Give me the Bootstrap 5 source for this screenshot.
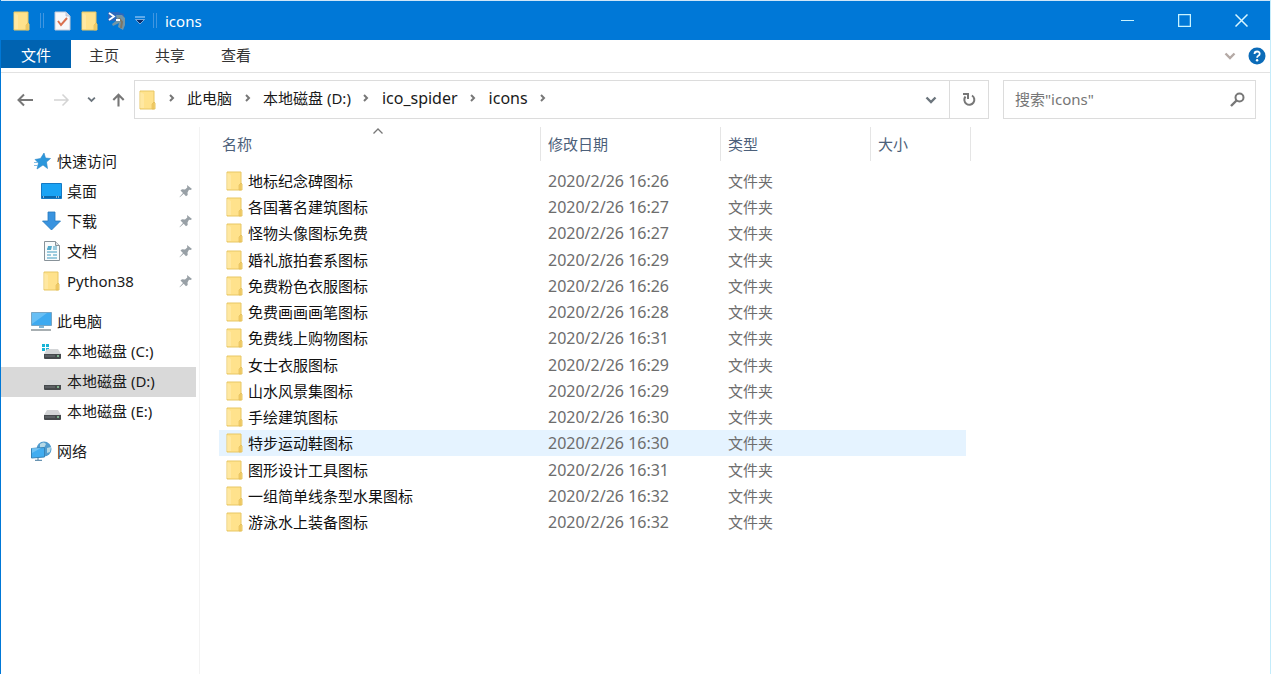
<!DOCTYPE html>
<html lang="zh-CN">
<head>
<meta charset="utf-8">
<meta name="viewport" content="width=device-width, initial-scale=1">
<title>icons</title>
<link href="https://cdn.jsdelivr.net/npm/bootstrap@5.3.0/dist/css/bootstrap.min.css" rel="stylesheet">
<style>
  body { font-family: "Noto Sans", "Noto Sans CJK SC", sans-serif; font-size: 15px; line-height: 20px; color: #1a1a1a; background: #fff; }
  svg { display: block; flex: none; }
  button, a { color: inherit; text-decoration: none; }
  .plain-btn { border: 0; background: none; padding: 0; display: flex; align-items: center; justify-content: center; }
  .explorer { border-left: 1px solid #0078d7; border-right: 1px solid #c4ecfb; }
  .title-bar { background: #0078d7; color: #fff; height: 40px; border-top: 1px solid #cfe6f8; padding: 0 0 0 12px; }
  .title-bar .quick { gap: 10px; }
  .divider { width: 4px; height: 15px; border: solid #4196e0; border-width: 0 1px; }
  .caption-btns .plain-btn { width: 57px; height: 37px; }
  .ribbon { height: 33px; border-bottom: 1px solid #e2e2e2; }
  .ribbon .tab-link { height: 28px; line-height: 30px; width: 66px; text-align: center; color: #333; }
  .ribbon .file-tab { width: 70px; background: #0063b1; color: #fff; }
  .ribbon .expand { color: #b5aaa6; }
  .nav-row { padding: 7px 14px 8px 0; }
  .nav-row .outlined { height: 39px; border: 1px solid #dcdcdc; }
  .arrows { width: 133px; padding-left: 14px; }
  .address { padding-left: 4px; }
  .address nav { padding-bottom: 3px; }
  .address .latin { font-size: 16px; }
  .crumb-sep { width: 31px; display: flex; justify-content: center; }
  .refresh { width: 39px; height: 37px; border-left: 1px solid #dcdcdc; }
  .search-box { width: 253px; margin-left: 14px; padding: 0 10px 0 11px; }
  .search-box input { border: 0; outline: 0; background: none; padding: 0 0 2px; min-width: 0; color: #555; }
  .search-box input::placeholder { color: #767676; opacity: 1; }
  .side { width: 199px; border-right: 1px solid #f3f3f3; padding-top: 20px; min-height: 547px; }
  .side a { height: 30px; margin-right: 3px; padding: 0 3px 2px 30px; gap: 5px; }
  .side .child { padding-left: 40px; }
  .side .group { margin-bottom: 10px; }
  .side .chosen { background: #d9d9d9; }
  .pin { margin-left: auto; }
  .files { width: 752px; margin-left: 19px; table-layout: fixed; border-collapse: separate; border-spacing: 0; }
  .files th { height: 34px; border-right: 1px solid #e5e5e5; font-weight: 400; color: #4c607a; padding: 0 7px; vertical-align: middle; }
  .files th:first-child { padding-left: 3px; }
  .files tbody::before { content: ""; display: block; height: 7px; }
  .files td { height: 26px; padding: 0 7px; vertical-align: middle; color: #6d6d6d; }
  .files tr:nth-child(4n) td { height: 27px; }
  .files td:last-child { border-right: 5px solid #fff; }
  .files .hovered td { background: #e5f3ff; }
  .files .date { font-size: 16px; }
  .files .file-name { gap: 5px; color: #111; }
  .sort-mark { left: 50%; top: 0; margin-left: -8px; }
</style>
<script src="https://cdn.jsdelivr.net/npm/bootstrap@5.3.0/dist/js/bootstrap.bundle.min.js"></script>
</head>
<body>
<svg width="0" height="0" class="position-absolute" aria-hidden="true">
  <defs>
    <symbol id="folder" viewBox="0 0 17 20"><path d="M1 1h14v11l1 1v6H1z" fill="#ffe28c" stroke="#e8c765"/><path d="M1 18V2l4 2v14z" fill="#ffedb0" opacity=".6"/><path d="M13 19v-5l2-2v7z" fill="#f5cf68" stroke="#dfb954" stroke-width=".6"/></symbol>
    <symbol id="chev" viewBox="0 0 8 8"><path d="M2 1l3 3-3 3" fill="none" stroke="#777" stroke-width="2"/></symbol>
    <symbol id="down" viewBox="0 0 12 8"><path d="M1.500 1.500L6 6l4.500-4.500" fill="none" stroke="currentColor" stroke-width="2.400"/></symbol>
    <symbol id="pinned" viewBox="0 0 14 14"><path d="M8 1l5 4-1.500 1-1.500-.3L8.500 8.500l.2 2.500L7 12.300 4.700 9.700.8 13.200.5 13 4 9 1.500 6.500 3 5.200l3 .2L8.300 3.500z" fill="#98a0a6"/></symbol>
    <symbol id="disk" viewBox="0 0 17 10"><path d="M3 0h11l3 5H0z" fill="#d3d5d7"/><path d="M0 5h17v4q0 1-1 1H1q-1 0-1-1z" fill="#45494c"/><path d="M1 7h10" stroke="#71777a"/><path d="M13 7h2" stroke="#8fd5a3" stroke-width="1.500"/></symbol>
  </defs>
</svg>
<div class="explorer min-vh-100">
  <header class="title-bar d-flex align-items-center">
    <div class="quick d-flex align-items-center">
      <svg width="17" height="20"><use href="#folder"/></svg>
      <span class="divider"></span>
      <button class="plain-btn" aria-label="属性"><svg width="17" height="20" viewBox="0 0 17 20"><path d="M1 1h11l4 4v14H1z" fill="#f7f8fa" stroke="#c5c9d6"/><path d="M12 1v4h4" fill="#d7dae4" stroke="#aeb8cc" stroke-width=".7"/><path d="M4 10l3 4 6-7" fill="none" stroke="#d9704f" stroke-width="2"/></svg></button>
      <button class="plain-btn" aria-label="新建文件夹"><svg width="17" height="20"><use href="#folder"/></svg></button>
      <button class="plain-btn" aria-label="PowerShell"><svg width="17" height="20" viewBox="0 0 17 20"><path d="M0 1h10l6 2v7H0z" fill="#2b69bd"/><path d="M8 4h6l3 3v7l-2 5-5-3 1-4-6 3-1-2 5-4z" fill="#7395a5"/><path d="M11 7l3 4-1 6" fill="none" stroke="#7d7666" stroke-width="2"/><path d="M1 2l5 3.500L1 9M8 9h4" fill="none" stroke="#fff" stroke-width="1.800"/></svg></button>
      <button class="plain-btn" aria-label="自定义快速访问工具栏"><svg width="10" height="9" viewBox="0 0 10 9"><path d="M0 1h10" stroke="#bcdcff"/><path d="M.5 3.500h9L5 8z" fill="#0b2e6c" stroke="#a9d0f7" stroke-width=".7"/></svg></button>
    </div>
    <span class="divider mx-2"></span>
    <span>icons</span>
    <div class="caption-btns d-flex ms-auto">
      <button class="plain-btn" aria-label="最小化"><svg width="13" height="13"><path d="M0 6.500h13" stroke="#c9f3ff"/></svg></button>
      <button class="plain-btn" aria-label="最大化"><svg width="13" height="13"><path d="M.5.5h12v12H.5z" fill="none" stroke="#c9f3ff" stroke-width="1.500"/></svg></button>
      <button class="plain-btn" aria-label="关闭"><svg width="13" height="13"><path d="M.5.5l12 12M12.500.5l-12 12" stroke="#d8f6ff" stroke-width="1.500"/></svg></button>
    </div>
  </header>

  <nav class="ribbon d-flex">
    <a href="#" class="tab-link file-tab">文件</a>
    <a href="#" class="tab-link">主页</a>
    <a href="#" class="tab-link">共享</a>
    <a href="#" class="tab-link">查看</a>
    <div class="d-flex align-items-center ms-auto gap-2 me-1">
      <button class="plain-btn expand me-1" aria-label="展开功能区"><svg width="12" height="8"><use href="#down"/></svg></button>
      <button class="plain-btn" aria-label="帮助"><svg width="18" height="18" viewBox="0 0 18 18"><circle cx="9" cy="9" r="8.500" fill="#0b6bb8"/><path d="M6.500 7q0-2.500 2.600-2.500T11.700 6.800q0 1.300-1.400 2-1.200.6-1.200 2" fill="none" stroke="#fff" stroke-width="1.800"/><circle cx="9.100" cy="13.200" r="1.200" fill="#fff"/></svg></button>
    </div>
  </nav>

  <div class="nav-row d-flex align-items-center">
    <div class="arrows d-flex align-items-center">
      <button class="plain-btn" aria-label="后退"><svg width="20" height="16" viewBox="0 0 20 16"><path d="M18 8H4M9 2.500L3.500 8 9 13.500" fill="none" stroke="#777" stroke-width="2"/></svg></button>
      <button class="plain-btn ms-3" aria-label="前进"><svg width="20" height="16" viewBox="0 0 20 16"><path d="M3 8h14M11.500 2.500L17 8l-5.500 5.500" fill="none" stroke="#d4d4d4" stroke-width="1.500"/></svg></button>
      <button class="plain-btn ms-3 text-secondary" aria-label="最近位置"><svg width="9" height="7"><use href="#down"/></svg></button>
      <button class="plain-btn ms-3" aria-label="上移"><svg width="13" height="16" viewBox="0 0 15 17"><path d="M7.500 16V3M1.500 8.500l6-6 6 6" fill="none" stroke="#777" stroke-width="2.400"/></svg></button>
    </div>
    <div class="address outlined d-flex align-items-center flex-grow-1">
      <svg width="17" height="20"><use href="#folder"/></svg>
      <nav class="d-flex align-items-center" aria-label="路径">
        <span class="crumb-sep"><svg width="8" height="8"><use href="#chev"/></svg></span>
        <a href="#">此电脑</a>
        <span class="crumb-sep"><svg width="8" height="8"><use href="#chev"/></svg></span>
        <a href="#">本地磁盘 (D:)</a>
        <span class="crumb-sep"><svg width="8" height="8"><use href="#chev"/></svg></span>
        <a href="#" class="latin">ico_spider</a>
        <span class="crumb-sep"><svg width="8" height="8"><use href="#chev"/></svg></span>
        <a href="#" class="latin">icons</a>
        <span class="crumb-sep"><svg width="8" height="8"><use href="#chev"/></svg></span>
      </nav>
      <button class="plain-btn ms-auto me-2 text-secondary" aria-label="以前的位置"><svg class="me-1" width="12" height="8"><use href="#down"/></svg></button>
      <button class="plain-btn refresh" aria-label="刷新"><svg width="14" height="15" viewBox="0 0 14 15"><path d="M10 3.500A5 5 0 1 1 3.500 4.500M1 2h5v5" fill="none" stroke="#777" stroke-width="2"/></svg></button>
    </div>
    <form class="search-box outlined d-flex align-items-center">
      <input class="flex-grow-1" type="text" placeholder='搜索"icons"' aria-label="搜索">
      <button class="plain-btn" type="button" aria-label="开始搜索"><svg width="15" height="15" viewBox="0 0 15 15"><circle cx="9.500" cy="5.500" r="4" fill="none" stroke="#777" stroke-width="2"/><path d="M6.500 8.500L1 14" stroke="#777" stroke-width="2.400"/></svg></button>
    </form>
  </div>

  <main class="d-flex">
    <nav class="side d-flex flex-column flex-shrink-0">
      <div class="group d-flex flex-column">
        <a href="#" class="d-flex align-items-center"><svg width="21" height="18" viewBox="0 0 21 18"><path d="M13 1l1.500 5 5 .5-4 3.500 1 6.500-4.500-3.500L6 17l1.500-6L4 7.500l5.500-1z" fill="#2b97dc" stroke="#2b84c4" stroke-width=".6"/><path d="M3 10.500h4M3 13.500h4" stroke="#82bde5" stroke-width="1.200"/></svg>快速访问</a>
        <a href="#" class="child d-flex align-items-center"><svg width="21" height="16" viewBox="0 0 21 16"><path d="M.5.5h20v15H.5z" fill="#1aa3f4" stroke="#1479c4"/><path d="M1 14h19" stroke="#0a68ad" stroke-width="2"/><path d="M2 14h1m12 0h1m1 0h1" stroke="#fff"/></svg>桌面<svg class="pin" width="14" height="14"><use href="#pinned"/></svg></a>
        <a href="#" class="child d-flex align-items-center"><svg width="21" height="20" viewBox="0 0 21 20"><path d="M7 1h7v9h5.500l-9 9-9-9H7z" fill="#3993df" stroke="#2678bd" stroke-width=".8"/></svg>下载<svg class="pin" width="14" height="14"><use href="#pinned"/></svg></a>
        <a href="#" class="child d-flex align-items-center"><svg width="21" height="20" viewBox="0 0 21 20"><path d="M3.500.5h11l4 4v15h-15z" fill="#f8fbfc" stroke="#889299"/><path d="M14.500.5v4h4" fill="#dbe2e6" stroke="#889299"/><path d="M6 8h3m3-2h4m-4 2h4M6 11h10M6 14h4m2 0h4M6 17h10" stroke="#3e9bc0" stroke-width="1.200"/><path d="M7 5h4l-1 4H6z" fill="#52a9cb"/></svg>文档<svg class="pin" width="14" height="14"><use href="#pinned"/></svg></a>
        <a href="#" class="child d-flex align-items-center"><svg width="21" height="20"><use href="#folder"/></svg>Python38<svg class="pin" width="14" height="14"><use href="#pinned"/></svg></a>
      </div>
      <div class="group d-flex flex-column">
        <a href="#" class="d-flex align-items-center"><svg width="21" height="19" viewBox="0 0 21 19"><path d="M.5.5h20v13H.5z" fill="#3eaaf0" stroke="#77a5c4"/><path d="M1 12L16 1H1z" fill="#83cdf9" opacity=".6"/><path d="M8 14h5v2H8z" fill="#80b5d4"/><path d="M0 18h20" stroke="#8b9499" stroke-width="1.500"/></svg>此电脑</a>
        <a href="#" class="child d-flex align-items-center"><svg width="21" height="16" viewBox="0 0 21 16"><path d="M1 1h3v3H1zM5 1h3v3H5zM1 5h3v3H1zM5 5h3v3H5z" fill="#18b4d6"/><use href="#disk" x="3" y="6" width="17" height="10"/></svg>本地磁盘 (C:)</a>
        <a href="#" class="child chosen d-flex align-items-center"><svg width="21" height="18" viewBox="0 0 21 18"><use href="#disk" x="3" y="8" width="17" height="10"/></svg>本地磁盘 (D:)</a>
        <a href="#" class="child d-flex align-items-center"><svg width="21" height="18" viewBox="0 0 21 18"><use href="#disk" x="3" y="8" width="17" height="10"/></svg>本地磁盘 (E:)</a>
      </div>
      <a href="#" class="d-flex align-items-center"><svg width="21" height="20" viewBox="0 0 21 20"><circle cx="13" cy="8" r="7.500" fill="#519cce"/><path d="M9 3q4-3 6 0l-2 4-4 1zM16 7l4-1-1 5-3 1z" fill="#b6d9e6"/><path d="M.5 7.500l13-1v9.500l-13 1z" fill="#42adf0" stroke="#3784b8"/><path d="M1 12l9-5H1z" fill="#8fd2f8" opacity=".6"/><path d="M7 17v2M4 19.300h7" stroke="#437a9f"/></svg>网络</a>
    </nav>

    <table class="files align-self-start">
      <colgroup><col style="width:322px"><col style="width:180px"><col style="width:150px"><col style="width:100px"></colgroup>
      <thead>
        <tr>
          <th class="position-relative">名称<svg class="sort-mark position-absolute" width="12" height="8" viewBox="0 0 12 8"><path d="M1.500 6.500L6 2l4.500 4.500" fill="none" stroke="#777" stroke-width="1.300"/></svg></th>
          <th>修改日期</th><th>类型</th><th>大小</th>
        </tr>
      </thead>
      <tbody id="file-rows"></tbody>
    </table>
  </main>
</div>
<script>
  const files = [
    ["地标纪念碑图标", "16:26"], ["各国著名建筑图标", "16:27"], ["怪物头像图标免费", "16:27"],
    ["婚礼旅拍套系图标", "16:29"], ["免费粉色衣服图标", "16:26"], ["免费画画画笔图标", "16:28"],
    ["免费线上购物图标", "16:31"], ["女士衣服图标", "16:29"], ["山水风景集图标", "16:29"],
    ["手绘建筑图标", "16:30"], ["特步运动鞋图标", "16:30"], ["图形设计工具图标", "16:31"],
    ["一组简单线条型水果图标", "16:32"], ["游泳水上装备图标", "16:32"]
  ];
  document.getElementById("file-rows").innerHTML = files.map(([name, time], i) =>
    `<tr${i === 10 ? ' class="hovered"' : ""}><td><a href="#" class="file-name d-flex align-items-center"><svg width="17" height="20"><use href="#folder"/></svg>${name}</a></td><td class="date">2020/2/26 ${time}</td><td>文件夹</td><td></td></tr>`).join("");
</script>
</body>
</html>
